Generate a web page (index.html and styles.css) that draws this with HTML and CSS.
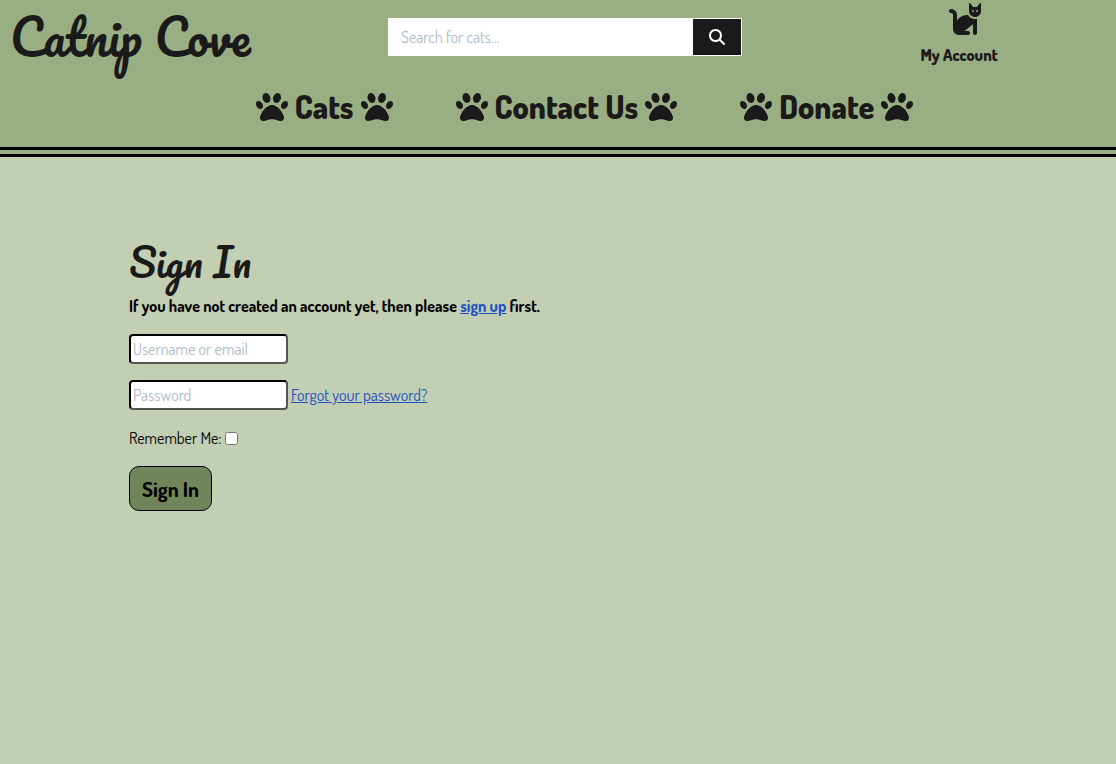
FILE: index.html
```html
<!DOCTYPE html>
<html lang="en">
<head>
<meta charset="utf-8">
<meta name="viewport" content="width=device-width, initial-scale=1">
<title>Catnip Cove - Sign In</title>
<link rel="stylesheet" href="styles.css">
</head>
<body>
<svg class="sprite" aria-hidden="true">
  <symbol id="paw" viewBox="0 0 512 512"><path d="M226.500 92.900c14.300 42.900-.3 86.200-32.600 96.800s-70.100-15.600-84.400-58.500s.3-86.200 32.600-96.800s70.100 15.600 84.400 58.500zM100.400 198.600c18.900 32.400 14.300 70.100-10.200 84.100s-59.700-.9-78.500-33.300S-2.700 179.300 21.800 165.300s59.700 .9 78.500 33.300zM69.200 401.200C121.600 259.900 214.700 224 256 224s134.400 35.900 186.800 177.200c3.600 9.700 5.200 20.100 5.200 30.500v1.600c0 25.800-20.900 46.700-46.700 46.700c-11.500 0-22.900-1.400-34-4.200l-88-22c-15.300-3.800-31.300-3.800-46.600 0l-88 22c-11.100 2.800-22.500 4.200-34 4.200C84.900 480 64 459.100 64 433.300v-1.600c0-10.400 1.600-20.800 5.200-30.500zM421.800 282.700c-24.500-14-29.100-51.700-10.200-84.100s54-47.300 78.500-33.300s29.100 51.700 10.200 84.100s-54 47.300-78.500 33.300zM310.100 189.700c-32.300-10.600-46.900-53.900-32.600-96.800s52.100-69.100 84.400-58.500s46.900 53.900 32.600 96.800s-52.100 69.100-84.400 58.500z"/></symbol>
</svg>
<header class="site-header">
  <div class="top-bar">
    <a class="logo" href="#">Catnip Cove</a>
    <form class="search">
      <input class="search-input" type="search" placeholder="Search for cats..." aria-label="Search for cats">
      <button class="search-button" type="submit" aria-label="Search">
        <svg class="search-icon" viewBox="0 0 512 512" aria-hidden="true"><path d="M416 208c0 45.900-14.900 88.300-40 122.700L502.600 457.400c12.500 12.500 12.500 32.800 0 45.300s-32.800 12.500-45.300 0L330.700 376c-34.400 25.200-76.800 40-122.700 40C93.100 416 0 322.900 0 208S93.100 0 208 0S416 93.100 416 208zM208 352a144 144 0 1 0 0-288 144 144 0 1 0 0 288z"/></svg>
      </button>
    </form>
    <a class="account" href="#">
      <svg class="cat-icon" viewBox="0 0 576 512" aria-hidden="true"><path d="M320 192h17.100c22.100 38.300 63.500 64 110.900 64c11 0 21.800-1.400 32-4v4 32V480c0 17.700-14.300 32-32 32s-32-14.300-32-32V339.200L280 448h56c17.700 0 32 14.300 32 32s-14.300 32-32 32H192c-53 0-96-43-96-96V192.500c0-16.100-12-29.800-28-31.800l-7.900-1c-17.500-2.200-30-18.200-27.800-35.700s18.200-30 35.700-27.800l7.900 1c48 6 84.100 46.800 84.100 95.300v85.300c34.400-51.700 93.200-85.800 160-85.800zm160 26.500v0c-10 3.500-20.800 5.500-32 5.500c-28.400 0-54-12.400-71.600-32h0c-3.700-4.100-7-8.500-9.900-13.200C357.300 164 352 146.600 352 128v0V32 12 10.700C352 4.800 356.700 .1 362.600 0h.2c3.300 0 6.400 1.600 8.400 4.200l0 .1L384 21.300l27.200 36.300L416 64h64l4.800-6.400L512 21.300 524.800 4.300l0-.1c2-2.600 5.100-4.200 8.400-4.200h.2C539.300 .1 544 4.800 544 10.700V12 32v96c0 17.300-4.600 33.600-12.600 47.600c-11.300 19.800-29.600 35.200-51.400 42.900zM432 128a16 16 0 1 0 -32 0 16 16 0 1 0 32 0zm48 16a16 16 0 1 0 0-32 16 16 0 1 0 0 32z"/></svg>
      <span>My Account</span>
    </a>
  </div>
  <nav class="main-nav">
    <a class="nav-link" href="#"><svg class="paw" aria-hidden="true"><use href="#paw"/></svg>Cats<svg class="paw" aria-hidden="true"><use href="#paw"/></svg></a>
    <a class="nav-link" href="#"><svg class="paw" aria-hidden="true"><use href="#paw"/></svg>Contact Us<svg class="paw" aria-hidden="true"><use href="#paw"/></svg></a>
    <a class="nav-link" href="#"><svg class="paw" aria-hidden="true"><use href="#paw"/></svg>Donate<svg class="paw" aria-hidden="true"><use href="#paw"/></svg></a>
  </nav>
</header>
<main class="content">
  <h1 class="title">Sign In</h1>
  <p class="intro">If you have not created an account yet, then please <a class="link" href="#">sign up</a> first.</p>
  <form class="sign-in">
    <input class="field" type="text" placeholder="Username or email" aria-label="Username or email">
    <div class="password-row">
      <input class="field" type="password" placeholder="Password" aria-label="Password">
      <a class="link" href="#">Forgot your password?</a>
    </div>
    <div class="remember">
      <label for="remember">Remember Me:</label>
      <input class="tick" id="remember" type="checkbox">
    </div>
    <button class="submit" type="submit">Sign In</button>
  </form>
</main>
</body>
</html>
```
FILE: styles.css
```css
* {
  box-sizing: border-box;
}

body {
  margin: 0;
  min-height: 100vh;
  background: #c2cfb3;
  color: #000;
  font-family: "Dosis", "Lato", sans-serif;
  font-size: 16px;
  line-height: 24px;
}

input,
button {
  font: inherit;
}

.sprite {
  display: none;
}

.site-header {
  background: #9aae84;
  border-bottom: 10px double #000;
  padding-bottom: 16px;
}

.site-header svg {
  fill: currentColor;
}

.top-bar {
  display: grid;
  grid-template-columns: 388fr 414fr 314fr;
  height: 83px;
}

.logo,
.title {
  color: #1a1a1a;
  font-family: "Pacifico", "Lato", cursive;
  font-weight: 400;
}

.logo {
  padding-left: 10px;
  font-size: 48px;
  line-height: 74px;
  text-decoration: none;
}

.search {
  display: flex;
  height: 38px;
  margin: 18px 60px 0 0;
  background: #fff;
  border: 1px solid #fff;
}

.search-input {
  flex: 1;
  min-width: 0;
  padding: 0 12px;
  border: 0;
  background: #fff;
  appearance: none;
}

::placeholder {
  color: #adbac7;
  opacity: 1;
}

.search-button {
  display: flex;
  align-items: center;
  justify-content: center;
  width: 48px;
  padding: 0;
  border: 0;
  background: #1a1a1a;
  color: #fff;
}

.search-icon {
  width: 16px;
  height: 16px;
}

.account {
  display: flex;
  flex-direction: column;
  align-items: center;
  gap: 8px;
  padding-top: 3px;
  color: #1a1a1a;
  font-weight: 900;
  text-decoration: none;
}

.cat-icon {
  width: 36px;
  height: 32px;
  margin-left: 12px;
}

.main-nav {
  display: flex;
  justify-content: center;
  gap: 63px;
  padding-left: 53px;
}

.nav-link {
  display: flex;
  align-items: center;
  gap: 7px;
  color: #1a1a1a;
  font-size: 32px;
  font-weight: 900;
  line-height: 48px;
  text-decoration: none;
  white-space: nowrap;
}

.paw {
  width: 32px;
  height: 32px;
}

.content {
  padding: 80px 129px;
}

.title {
  margin: 0;
  font-size: 39px;
  line-height: 50px;
}

.intro {
  margin: 7px 0 16px;
  font-weight: 700;
}

.sign-in {
  display: flex;
  flex-direction: column;
  align-items: flex-start;
  gap: 16px;
}

.field {
  width: 159px;
  height: 30px;
  padding: 1px 2px;
  background: #fff;
  border: 2px solid;
  border-color: #000 #555 #555 #000;
  border-radius: 4px;
}

.password-row,
.remember {
  display: flex;
  align-items: center;
  gap: 3px;
}

.link {
  color: #1d4fc4;
}

.tick {
  width: 13px;
  height: 13px;
  margin: 0;
}

.submit {
  padding: 9px 12px;
  background: #70855b;
  border: 1px solid #000;
  border-radius: 10px;
  color: #000;
  font-size: 21px;
  font-weight: 700;
  line-height: 25px;
}
```
